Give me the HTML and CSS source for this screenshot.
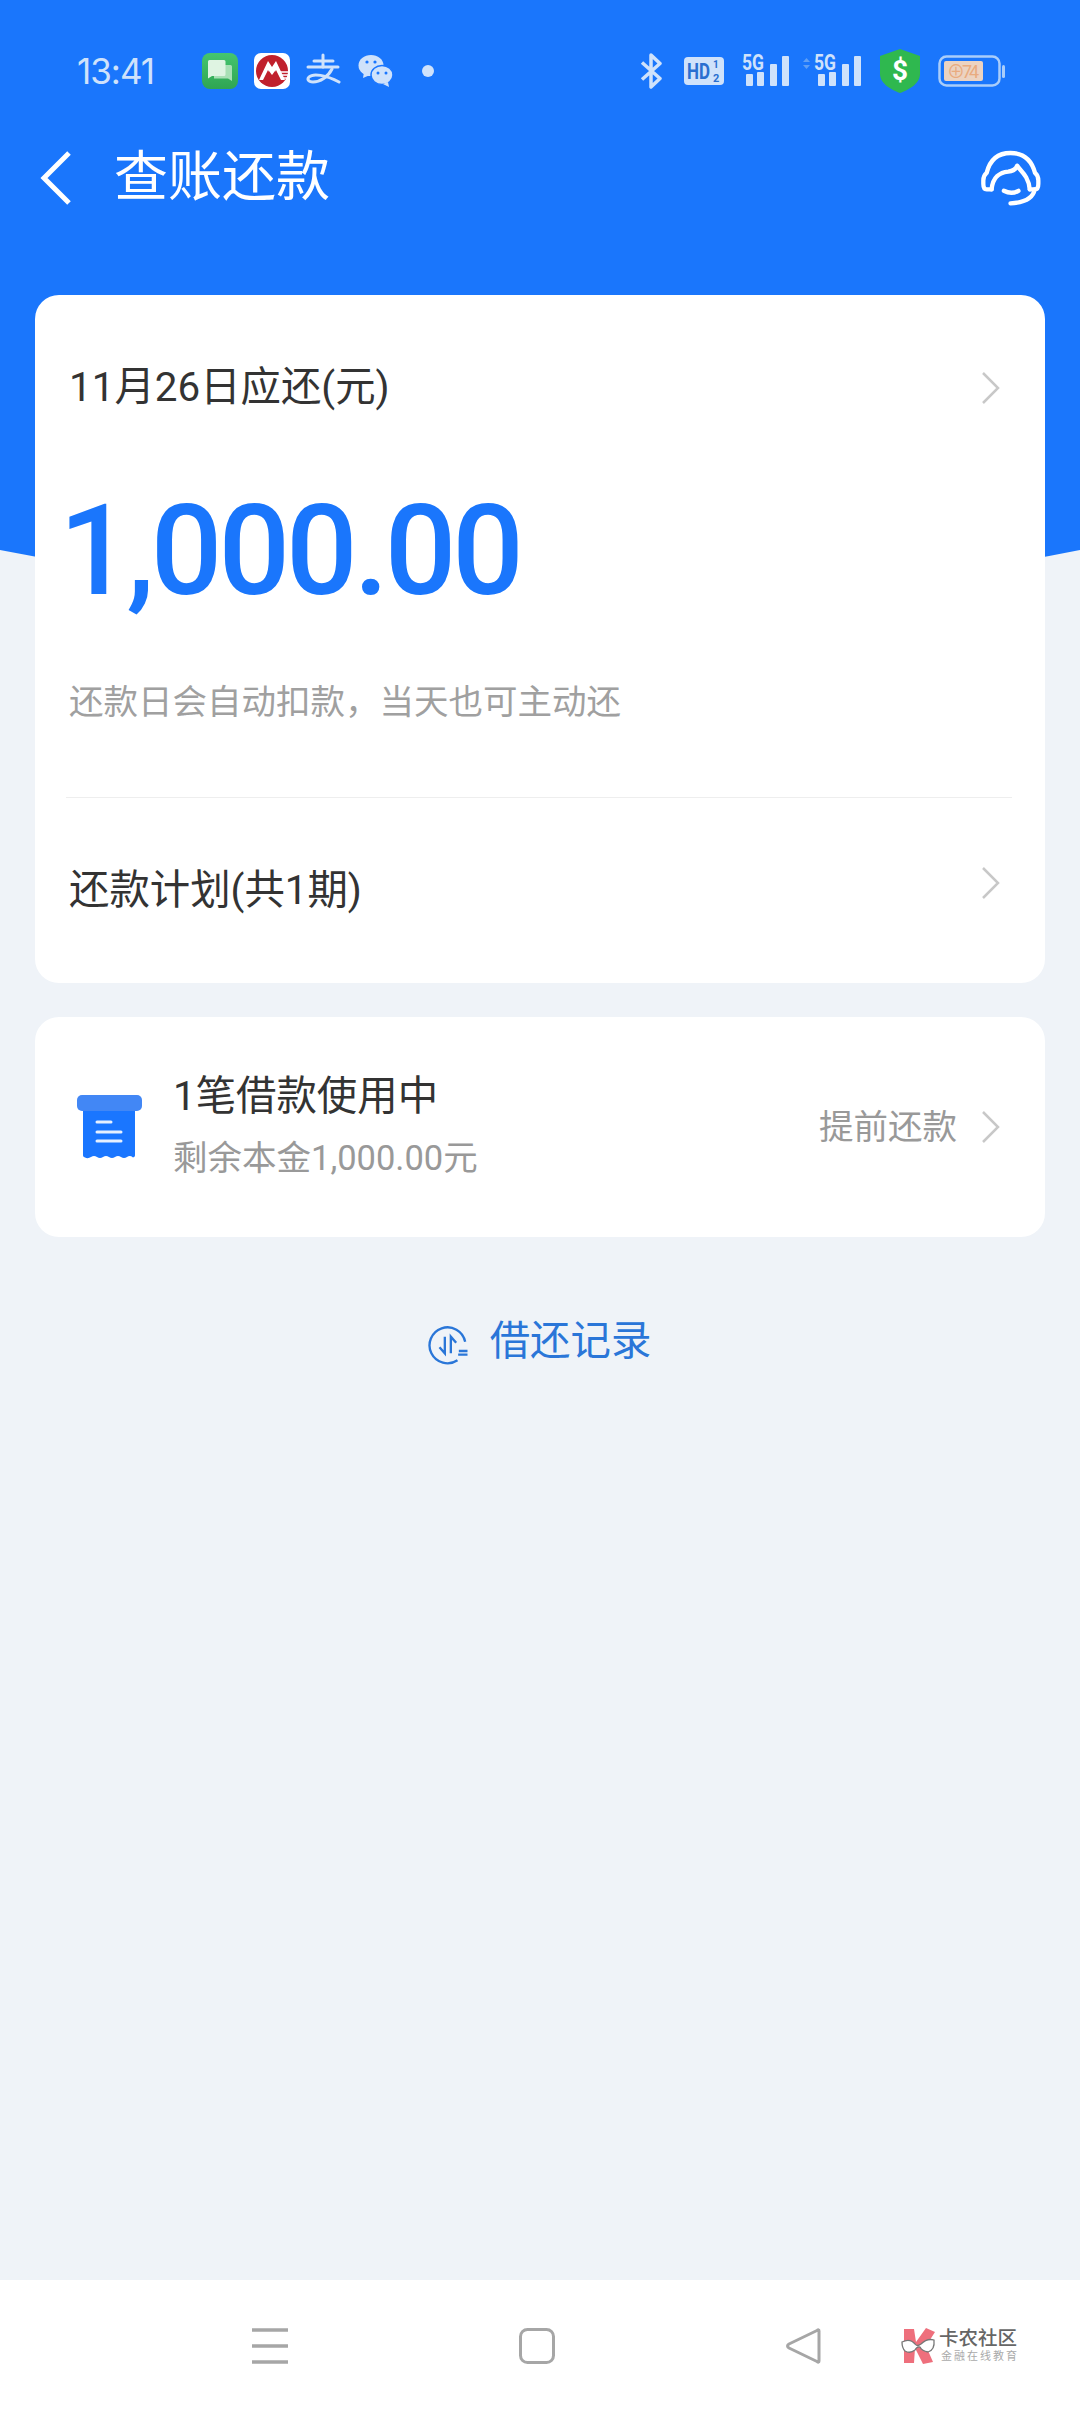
FILE: index.html
```html
<!DOCTYPE html>
<html lang="zh-CN">
<head>
<meta charset="utf-8">
<title>查账还款</title>
<link rel="stylesheet" href="styles.css">
</head>
<body>
<div class="screen">
  <div class="hero-bg"></div>

  <div class="status">
    <span class="time">13:41</span>
    <div class="status-apps">
      <svg class="ico36" viewBox="0 0 36 36"><defs><linearGradient id="chatg" x1="0" y1="0" x2="0" y2="1"><stop offset="0" stop-color="#45c56f"/><stop offset="1" stop-color="#2fa552"/></linearGradient></defs><rect width="36" height="36" rx="8" fill="url(#chatg)"/><path d="M12 12H28.500A1.500 1.500 0 0 1 30 13.500V28L26 25.500H12z" fill="#a8e0b5"/><path d="M7.500 7H22A1.500 1.500 0 0 1 23.500 8.500V21.500A1.500 1.500 0 0 1 22 23H10L6 25.500V8.500A1.500 1.500 0 0 1 7.500 7z" fill="#dff4e2"/></svg>
      <svg class="ico36" viewBox="0 0 36 36"><rect width="36" height="36" rx="7" fill="#fff"/><circle cx="18" cy="18" r="16" fill="#c0202c"/><path d="M5 27 14 8 18 14 22 8 31 27H24.500L21 18 18 22 15 18 11.500 27z" fill="#fff"/><path d="M9 27 14 17 18 25 22 17 27 27z" fill="#c0202c"/><path d="M24 19H36M26 22H36M27 25H36" stroke="#fff" stroke-width="1.300"/></svg>
      <svg class="ico36" viewBox="0 0 36 36"><g fill="none" stroke="#cfe2fb" stroke-width="3" stroke-linecap="round" stroke-linejoin="round"><path d="M8 8H27"/><path d="M2 14H32"/><path d="M17 2V14"/><path d="M26 16C22 24 14 29 7 29 2 29 1 26 3 24 7 20 20 22 33 29"/></g></svg>
      <svg class="ico36" viewBox="0 0 36 36"><ellipse cx="13" cy="12.500" rx="12.500" ry="10.500" fill="#cfe2fb"/><path d="M6 19l-1 6 7-3z" fill="#cfe2fb"/><ellipse cx="24" cy="22" rx="11" ry="9.500" fill="#cfe2fb" stroke="#1a76ff" stroke-width="1.500"/><path d="M30 29l1 5-6-3z" fill="#cfe2fb"/><circle cx="9" cy="9" r="1.600" fill="#1a76ff"/><circle cx="17" cy="9" r="1.600" fill="#1a76ff"/><circle cx="20" cy="20" r="1.500" fill="#1a76ff"/><circle cx="28" cy="20" r="1.500" fill="#1a76ff"/></svg>
      <span class="dot"></span>
    </div>
    <div class="status-sys">
      <svg class="bt" viewBox="0 0 26 36"><path d="M2 9.500 20 25.500 11 34V2l9 8.500L2 26.500" fill="none" stroke="#cfe2fb" stroke-width="3.500" stroke-linejoin="round"/></svg>
      <svg class="hd" viewBox="0 0 40 28"><rect width="40" height="28" rx="4" fill="#cfe2fb"/><text class="hd-t" x="3" y="22" font-size="22" textLength="23" lengthAdjust="spacingAndGlyphs">HD</text><text class="hd-t" x="29" y="11" font-size="10">1</text><text class="hd-t" x="29" y="25" font-size="11">2</text></svg>
      <svg class="sig" viewBox="0 -8 48 48"><text class="sig-t" x="0" y="15" font-size="22" textLength="22" lengthAdjust="spacingAndGlyphs">5G</text><g fill="#cfe2fb"><rect x="4" y="19" width="7" height="12" rx="1"/><rect x="15" y="17" width="7" height="14" rx="1"/><rect x="28" y="9" width="7" height="22" rx="1"/><rect x="40" y="1" width="7" height="30" rx="1"/></g></svg>
      <svg class="sig sig-2" viewBox="0 -8 60 48"><path d="M1 7l3.500-4L8 7zM1 10l3.500 4L8 10z" fill="#5f9ff5"/><text class="sig-t" x="12" y="15" font-size="22" textLength="22" lengthAdjust="spacingAndGlyphs">5G</text><g fill="#cfe2fb"><rect x="16" y="19" width="7" height="12" rx="1"/><rect x="27" y="17" width="7" height="14" rx="1"/><rect x="40" y="9" width="7" height="22" rx="1"/><rect x="52" y="1" width="7" height="30" rx="1"/></g></svg>
      <svg class="shield" viewBox="0 0 40 44"><path d="M20 0 40 7V25C40 35 28 41 20 44 12 41 0 35 0 25V7z" fill="#2fb84f"/><text class="shield-t" x="20" y="31" font-size="28" text-anchor="middle">$</text></svg>
      <svg class="batt" viewBox="0 0 68 32"><rect x="1.500" y="1.500" width="60" height="29" rx="7" fill="none" stroke="#a9cdfa" stroke-width="2.500"/><rect x="6" y="6" width="39" height="20" rx="2" fill="#ecd3c1"/><text class="batt-t" x="9" y="23" font-size="18" textLength="32" lengthAdjust="spacing">&#8853;74</text><rect x="64" y="10" width="3" height="13" rx="1.500" fill="#a9cdfa"/></svg>
    </div>
  </div>

  <header class="toolbar">
    <svg class="back" viewBox="0 0 32 54"><path d="M29 2 4 27l25 25" fill="none" stroke="#fff" stroke-width="5"/></svg>
    <h1 class="title">查账还款</h1>
    <svg class="support" viewBox="1140 360 190 175"><g fill="none" stroke="#fff" stroke-width="13" stroke-linecap="round" stroke-linejoin="round"><path d="M1175 482H1160Q1150 482 1150 465V455Q1150 440 1160 432 1175 372 1232 372 1290 372 1306 432 1316 440 1316 455V465Q1316 482 1306 482H1290"/><path d="M1175 482C1178 445 1200 430 1225 428 1240 426 1250 418 1252 410 1260 425 1287 440 1290 482"/><path d="M1212 486Q1235 498 1256 486"/><path d="M1305 482C1300 510 1270 522 1232 524"/></g></svg>
  </header>

  <main class="content">
    <section class="card">
      <div class="row row-head">
        <span class="label">11月26日应还(元)</span>
        <svg class="chev" viewBox="0 0 20 34"><path d="M2 2l15 15L2 32" fill="none" stroke="#c8c8c8" stroke-width="2.500"/></svg>
      </div>
      <div class="amount">1,000.00</div>
      <p class="note">还款日会自动扣款，当天也可主动还</p>
      <div class="divider"></div>
      <div class="row row-plan">
        <span class="label">还款计划(共1期)</span>
        <svg class="chev chev-up" viewBox="0 0 20 34"><path d="M2 2l15 15L2 32" fill="none" stroke="#c8c8c8" stroke-width="2.500"/></svg>
      </div>
    </section>

    <section class="card loan">
      <svg class="receipt" viewBox="0 0 65 64"><path d="M6 12H58V60.500Q58 62 56 62.500 53 60 50 62 47 64 44 62 41 60 38 62 35 64 32 62 29 60 26 62 23 64 20 62 17 60 14 62 11 64 8 62.500 6 62 6 60.500z" fill="#1a76ff"/><rect width="65" height="16" rx="5" fill="#4287f5"/><path d="M20 27H34M20 37H44M20 46H44" stroke="#e6f0ff" stroke-width="3" stroke-linecap="round"/></svg>
      <div class="loan-text">
        <div class="loan-title">1笔借款使用中</div>
        <div class="loan-sub">剩余本金1,000.00元</div>
      </div>
      <span class="prepay">提前还款</span>
      <svg class="chev" viewBox="0 0 20 34"><path d="M2 2l15 15L2 32" fill="none" stroke="#c8c8c8" stroke-width="2.500"/></svg>
    </section>

    <div class="record">
      <svg class="record-ico" viewBox="85 130 125 120"><g fill="none" stroke="#2a76d8" stroke-width="7"><path d="M199 180A54 54 0 1 0 176 236"/><path d="M138 165V215L122 197"/><path d="M156 215V165L172 183"/><path d="M180 208H206M178 219H206"/></g></svg>
      <span class="record-text">借还记录</span>
    </div>
  </main>

  <nav class="navbar">
    <svg class="nav-ico" viewBox="0 0 36 36"><path d="M0 2H36M0 18H36M0 34H36" stroke="#a6a6a6" stroke-width="3.500"/></svg>
    <svg class="nav-ico" viewBox="0 0 36 36"><rect x="1.500" y="1.500" width="33" height="33" rx="7" fill="none" stroke="#a6a6a6" stroke-width="3"/></svg>
    <svg class="nav-ico" viewBox="0 0 36 36"><path d="M33 3V33Q33 35 31 33.500L3 20Q0 18 3 16L31 2.500Q33 1 33 3z" fill="none" stroke="#a6a6a6" stroke-width="3" stroke-linejoin="round"/></svg>
    <div class="mark">
      <svg class="mark-ico" viewBox="0 0 36 36"><path d="M3 1H13L15 14 25 0l9 4-9 14 7 16-10 2-8-16-1 15H3z" fill="#ee6f7c"/><path d="M1 14Q9 10 14 16 16 19 20 16 26 10 33 12 34 22 27 24 21 23 19 19 16 18 14 22 9 26 4 23 1 20 1 14z" fill="#fff" stroke="#777" stroke-width="1.300"/></svg>
      <div class="mark-text">
        <span class="mark-name">卡农社区</span>
        <span class="mark-sub">金融在线教育</span>
      </div>
    </div>
  </nav>
</div>
</body>
</html>
```
FILE: styles.css
```css
* { box-sizing: border-box; }
html, body { margin: 0; padding: 0; }
body {
  font-family: Roboto, "Noto Sans CJK SC", sans-serif;
  background: #eff3f8;
  color: #333;
}
.screen {
  position: relative;
  width: 1080px;
  height: 2412px;
  display: flex;
  flex-direction: column;
  overflow: hidden;
  background: #eff3f8;
}
.hero-bg {
  position: absolute;
  left: 0;
  top: 0;
  width: 1080px;
  height: 660px;
  background: #1a76fc;
  clip-path: path("M0 0H1080V550Q540 658 0 550Z");
}

/* status bar */
.status {
  position: relative;
  height: 94px;
  padding: 48px 74px 0 77px;
  display: flex;
  align-items: center;
  color: #cfe2fb;
}
.time {
  font-family: Inter, sans-serif;
  font-size: 35px;
  letter-spacing: -1px;
  width: 125px;
  line-height: 46px;
}
.status-apps { display: flex; align-items: center; gap: 16px; }
.ico36 { width: 36px; height: 36px; display: block; }
.dot {
  width: 12px;
  height: 12px;
  margin-left: 12px;
  border-radius: 50%;
  background: #cfe2fb;
}
.status-sys { margin-left: auto; display: flex; align-items: center; gap: 18px; }
.bt { width: 26px; height: 36px; display: block; }
.hd { width: 40px; height: 28px; display: block; }
.hd-t { font-family: Roboto, sans-serif; font-weight: 700; fill: #2a6fd0; }
.sig { width: 48px; height: 48px; display: block; margin-top: 0; }
.sig-2 { width: 60px; margin-left: -6px; }
.sig-t { font-family: Roboto, sans-serif; font-weight: 700; fill: #cfe2fb; }
.shield { width: 40px; height: 44px; display: block; }
.shield-t { font-family: Roboto, sans-serif; font-weight: 700; fill: #fff; }
.batt { width: 68px; height: 32px; display: block; }
.batt-t { font-family: Roboto, sans-serif; fill: #e9ab7f; }

/* toolbar */
.toolbar {
  position: relative;
  height: 168px;
  padding: 0 37px 0 40px;
  display: flex;
  align-items: center;
}
.back { width: 32px; height: 54px; display: block; }
.title {
  margin: 0 0 0 42px;
  font-size: 54px;
  font-weight: 400;
  color: #fff;
  line-height: 80px;
}
.support { width: 63px; height: 58px; margin-left: auto; display: block; }

/* content */
.content {
  position: relative;
  flex: 1;
  padding: 33px 35px 0;
  display: flex;
  flex-direction: column;
}
.card {
  background: #fff;
  border-radius: 24px;
}
.row {
  display: flex;
  align-items: center;
  justify-content: space-between;
  padding: 0 44px 0 34px;
}
.row-head { height: 186px; }
.row-plan { height: 185px; }
.label { font-size: 40.400px; color: #333; line-height: 56px; }
.chev { width: 20px; height: 34px; display: block; flex: none; }
.chev-up { margin-top: -15px; }
.amount {
  height: 134px;
  padding: 3px 0 0 24px;
  font-size: 126px;
  font-weight: 500;
  line-height: 134px;
  letter-spacing: -4px;
  color: #1a76fc;
}
.note {
  margin: 62px 0 70px 34px;
  font-size: 34.500px;
  line-height: 50px;
  color: #a0a0a0;
}
.divider { height: 1px; margin: 0 33px 0 31px; background: #eeeeee; }

.loan {
  height: 220px;
  margin-top: 34px;
  padding: 0 44px 0 42px;
  display: flex;
  align-items: center;
}
.receipt { width: 65px; height: 64px; display: block; flex: none; }
.loan-text { margin-left: 31px; flex: 1; }
.loan-title { font-size: 40.400px; line-height: 60px; padding-top: 3px; height: 63px; color: #333; }
.loan-sub { font-size: 34.500px; line-height: 63px; color: #999; }
.prepay { font-size: 34.500px; line-height: 50px; color: #999; margin-right: 24px; }

.record {
  margin-top: 75px;
  display: flex;
  align-items: center;
  justify-content: center;
  gap: 21px;
  padding-right: 2px;
}
.record-ico { width: 42px; height: 40px; display: block; margin-top: 5px; }
.record-text { font-size: 40.400px; line-height: 60px; color: #2a76d8; }

/* nav bar */
.navbar {
  position: relative;
  height: 132px;
  background: #fff;
  padding-left: 252px;
  display: flex;
  align-items: center;
  gap: 231px;
}
.nav-ico { width: 36px; height: 36px; display: block; }
.mark { margin-left: -152px; display: flex; align-items: center; gap: 2px; }
.mark-ico { width: 36px; height: 36px; display: block; }
.mark-text { display: flex; flex-direction: column; }
.mark-name { font-size: 19.500px; line-height: 22px; font-weight: 500; color: #666; white-space: nowrap; }
.mark-sub { font-size: 11px; line-height: 14px; letter-spacing: 2px; color: #aaa; white-space: nowrap; padding-left: 2px; }
```
